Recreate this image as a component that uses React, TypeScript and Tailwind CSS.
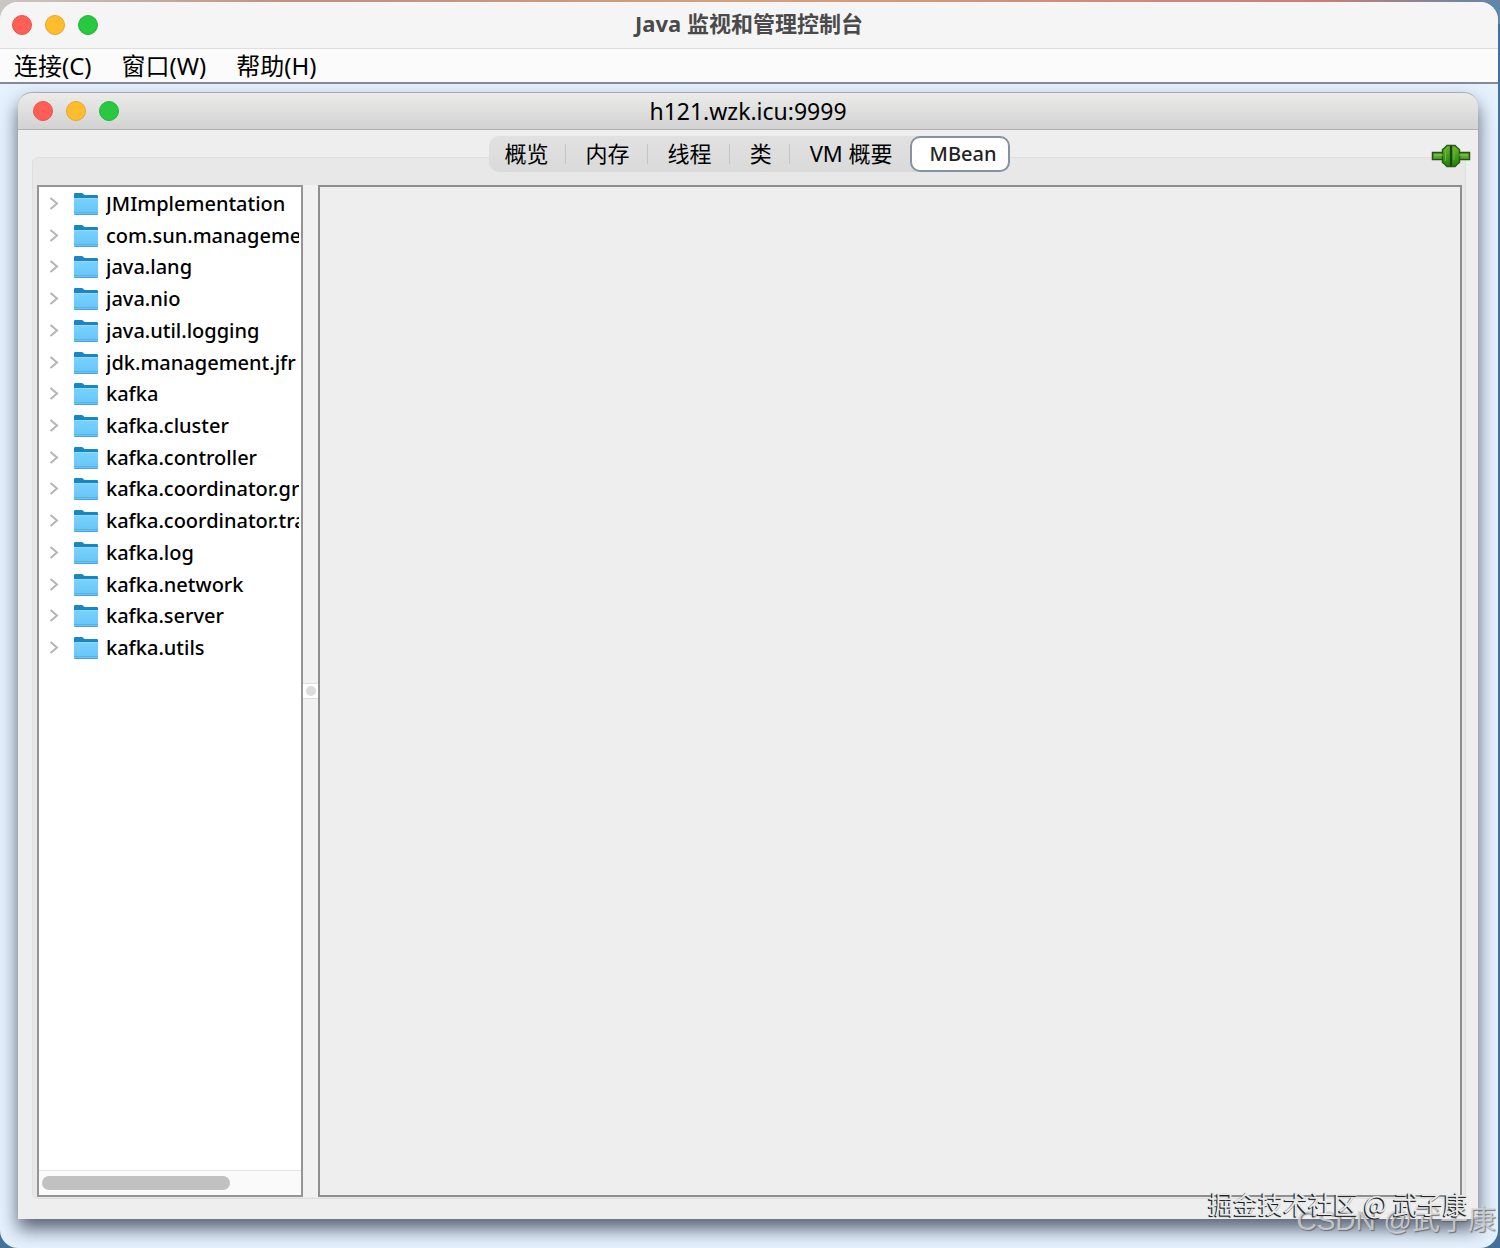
import { FC, useState } from "react";

const MENUS = ["连接(C)", "窗口(W)", "帮助(H)"];

const TABS = ["概览", "内存", "线程", "类", "VM 概要", "MBean"];

const DOMAINS = [
  "JMImplementation",
  "com.sun.management",
  "java.lang",
  "java.nio",
  "java.util.logging",
  "jdk.management.jfr",
  "kafka",
  "kafka.cluster",
  "kafka.controller",
  "kafka.coordinator.group",
  "kafka.coordinator.transaction",
  "kafka.log",
  "kafka.network",
  "kafka.server",
  "kafka.utils",
];

const TrafficLights: FC = () => {
  return (
    <div className="flex gap-[13px]">
      <button aria-label="关闭" className="size-5 rounded-full border border-[#e9524a] bg-[#ff5f57]" />
      <button aria-label="最小化" className="size-5 rounded-full border border-[#e5a52b] bg-[#febc2e]" />
      <button aria-label="缩放" className="size-5 rounded-full border border-[#22b53a] bg-[#28c840]" />
    </div>
  );
};

const ChevronIcon: FC = () => {
  return (
    <svg width="10" height="14" viewBox="0 0 10 14" fill="none" className="shrink-0">
      <path d="M1.5 1 8 6.5 1.5 12" stroke="#b4b4b4" strokeWidth="2" />
    </svg>
  );
};

const FolderIcon: FC = () => {
  return (
    <svg width="26" height="24" viewBox="0 0 26 24" className="shrink-0">
      <defs>
        <linearGradient id="folder-front" x1="0" y1="0" x2="0" y2="1">
          <stop offset="0" stopColor="#7ad2fc" />
          <stop offset="1" stopColor="#64c4f8" />
        </linearGradient>
      </defs>
      <path d="M1 2.2Q1 1 2.2 1H8.6Q9.4 1 10 1.6L11.4 3H23.8Q25 3 25 4.2V9H1Z" fill="#1b86c4" />
      <path d="M1 6H25V21.6Q25 23 23.6 23H2.4Q1 23 1 21.6Z" fill="url(#folder-front)" />
      <path d="M1 6.5H25" stroke="#8fdcff" />
      <path d="M1 20.5H25" stroke="#58b4e6" />
      <path d="M1.3 22.5H24.7" stroke="#4aa3d4" />
    </svg>
  );
};

const PlugIcon: FC = () => {
  return (
    <svg width="40" height="24" viewBox="0 0 40 24">
      <defs>
        <linearGradient id="plug-body" x1="0" y1="0" x2="0" y2="1">
          <stop offset="0" stopColor="#6fb53a" />
          <stop offset="0.5" stopColor="#3fa017" />
          <stop offset="1" stopColor="#23800a" />
        </linearGradient>
      </defs>
      <rect x="1.5" y="8.5" width="12" height="7" fill="#58a82c" stroke="#264f12" strokeWidth="1.5" />
      <rect x="26.5" y="8.5" width="12" height="7" fill="#58a82c" stroke="#264f12" strokeWidth="1.5" />
      <path
        d="M19.5 1.5V22.5L16 22.5 14 20.5 11.5 18.5V5.5L14 3.5 16 1.5Z"
        fill="url(#plug-body)"
        stroke="#2c5a17"
        strokeWidth="1.5"
      />
      <path
        d="M20.5 1.5V22.5L24 22.5 26 20.5 28.5 18.5V5.5L26 3.5 24 1.5Z"
        fill="url(#plug-body)"
        stroke="#2c5a17"
        strokeWidth="1.5"
      />
      <path d="M3 11H12M28 11H37" stroke="#8acb5f" />
      <path d="M14.5 6V17M23 5V16" stroke="#6dba45" />
      <path d="M20 2V22" stroke="#173d08" strokeWidth="1.5" />
    </svg>
  );
};

interface TabBarProps {
  selected: string;
  onSelect: (tab: string) => void;
}

const TabBar: FC<TabBarProps> = ({ selected, onSelect }) => {
  return (
    <div
      role="tablist"
      className="relative flex h-9 items-center rounded-[10px] bg-linear-to-b from-[#e1e1e1] to-[#dadada]"
    >
      {TABS.map((tab, i) =>
        tab === selected ? (
          <button
            key={tab}
            role="tab"
            aria-selected
            className="h-9 rounded-[10px] border-2 border-[#8593a0] bg-white pr-3 pl-[18px] text-[20px] leading-8 font-medium text-[#222]"
          >
            {tab}
          </button>
        ) : (
          <button
            key={tab}
            role="tab"
            aria-selected={false}
            onClick={() => onSelect(tab)}
            className="flex h-9 items-center text-[22px] leading-8"
          >
            <span className={i === 0 ? "pr-4 pb-0.5 pl-4" : "pr-[17px] pb-0.5 pl-5"}>{tab}</span>
            {TABS[i + 1] !== selected && <span className="h-5 w-px bg-[#c4c4c4]" />}
          </button>
        )
      )}
    </div>
  );
};

const DomainTree: FC = () => {
  return (
    <div className="flex w-[266px] shrink-0 flex-col border-2 border-[#959595] bg-white pt-px">
      <ul role="tree" className="grid h-[476px] auto-rows-fr overflow-hidden pr-0.5">
        {DOMAINS.map((name) => (
          <li key={name} role="treeitem" className="flex min-w-0">
            <button className="flex min-w-0 flex-1 items-center pl-[10px] text-left">
              <ChevronIcon />
              <span className="ml-[14px]">
                <FolderIcon />
              </span>
              <span className="ml-[7px] overflow-hidden text-[20px] leading-7 font-medium whitespace-nowrap">
                {name}
              </span>
            </button>
          </li>
        ))}
      </ul>
      <div className="mt-auto border-t border-[#e4e4e4] bg-[#fafafa] px-[3px] py-[5px]">
        <div className="h-[14px] w-[188px] rounded-full bg-[#c1c1c1]" />
      </div>
    </div>
  );
};

export default function App() {
  const [tab, setTab] = useState("MBean");

  return (
    <div className="relative flex min-h-screen flex-col overflow-hidden bg-[#44709a] bg-[linear-gradient(to_right,#c9c6c4,#c08f80_20%,#d3a27c_50%,#c97f78_88%,#5f87ab)] bg-[length:100%_24px] bg-no-repeat pt-0.5 pr-0.5 font-['Noto_Sans','Noto_Sans_CJK_SC',sans-serif] text-black">
      <div className="flex flex-1 flex-col overflow-hidden rounded-[18px] bg-[#e6f1fe]">
        <header className="grid h-[47px] grid-cols-[1fr_auto_1fr] items-center border-b border-[#dedede] bg-[#f5f5f6] px-3">
          <TrafficLights />
          <h1 className="pb-1 text-[22px] leading-7 font-bold text-[#4a4a4a]">Java 监视和管理控制台</h1>
        </header>
        <nav className="flex h-[35px] items-center gap-[30px] border-b-2 border-[#858b94] bg-[#fbfbfb] px-[14px]">
          {MENUS.map((menu) => (
            <button key={menu} className="text-[24px] leading-8">
              {menu}
            </button>
          ))}
        </nav>

        <main className="flex flex-1 flex-col px-[18px] pt-2 pr-5 pb-[29px]">
          <section className="flex flex-1 flex-col rounded-t-[14px] bg-[#eeeeee] shadow-[0_10px_18px_0px_rgba(40,50,65,0.75)]">
            <div className="grid h-[38px] grid-cols-[1fr_auto_1fr] items-center rounded-t-[14px] border-t border-b border-t-[#a9adb2] border-b-[#b2b2b2] bg-linear-to-b from-[#ebecea] to-[#d2d2d2] px-[15px]">
              <TrafficLights />
              <h2 className="text-[23px] leading-8">h121.wzk.icu:9999</h2>
            </div>

            <div className="flex flex-1 flex-col px-[14px] pt-[27px] pr-3 pb-5">
              <div className="relative flex flex-1 flex-col rounded-md border border-[#dfdfdf] bg-[#e8e8e8] pr-[3px] pb-px pl-1">
                <div className="-mt-[22px] flex justify-center">
                  <TabBar selected={tab} onSelect={setTab} />
                </div>
                <div className="absolute -top-[14px] -right-[6px]">
                  <PlugIcon />
                </div>
                <div className="mt-[13px] flex flex-1 bg-[#eeeeee]">
                  <DomainTree />
                  <div className="flex w-[15px] items-center justify-center bg-[#f1f1f1]">
                    <button
                      aria-label="调整大小"
                      className="flex h-4 w-[15px] items-center justify-center border-y border-[#dedede] bg-white"
                    >
                      <span className="size-[10px] rounded-full bg-[#dcdcdc]" />
                    </button>
                  </div>
                  <div className="flex-1 border-2 border-[#8e8e8e] bg-[#eeeeee]" />
                </div>
              </div>
            </div>
          </section>
        </main>
      </div>

      <p className="absolute right-1 bottom-[7px] text-[28px] leading-10 text-[#d8dadd]/80 [text-shadow:1px_1px_1px_rgba(90,95,100,0.8)] font-['Liberation_Sans','Noto_Sans_CJK_SC',sans-serif]">
        CSDN @武子康
      </p>
      <p className="absolute right-8 bottom-[27px] text-[25px] leading-9 text-[#e8e8e8] [text-shadow:-1px_1px_0_#222,-1px_1px_1px_#444] font-['Noto_Sans_CJK_SC',sans-serif]">
        掘金技术社区 @ 武子康
      </p>
    </div>
  );
}
